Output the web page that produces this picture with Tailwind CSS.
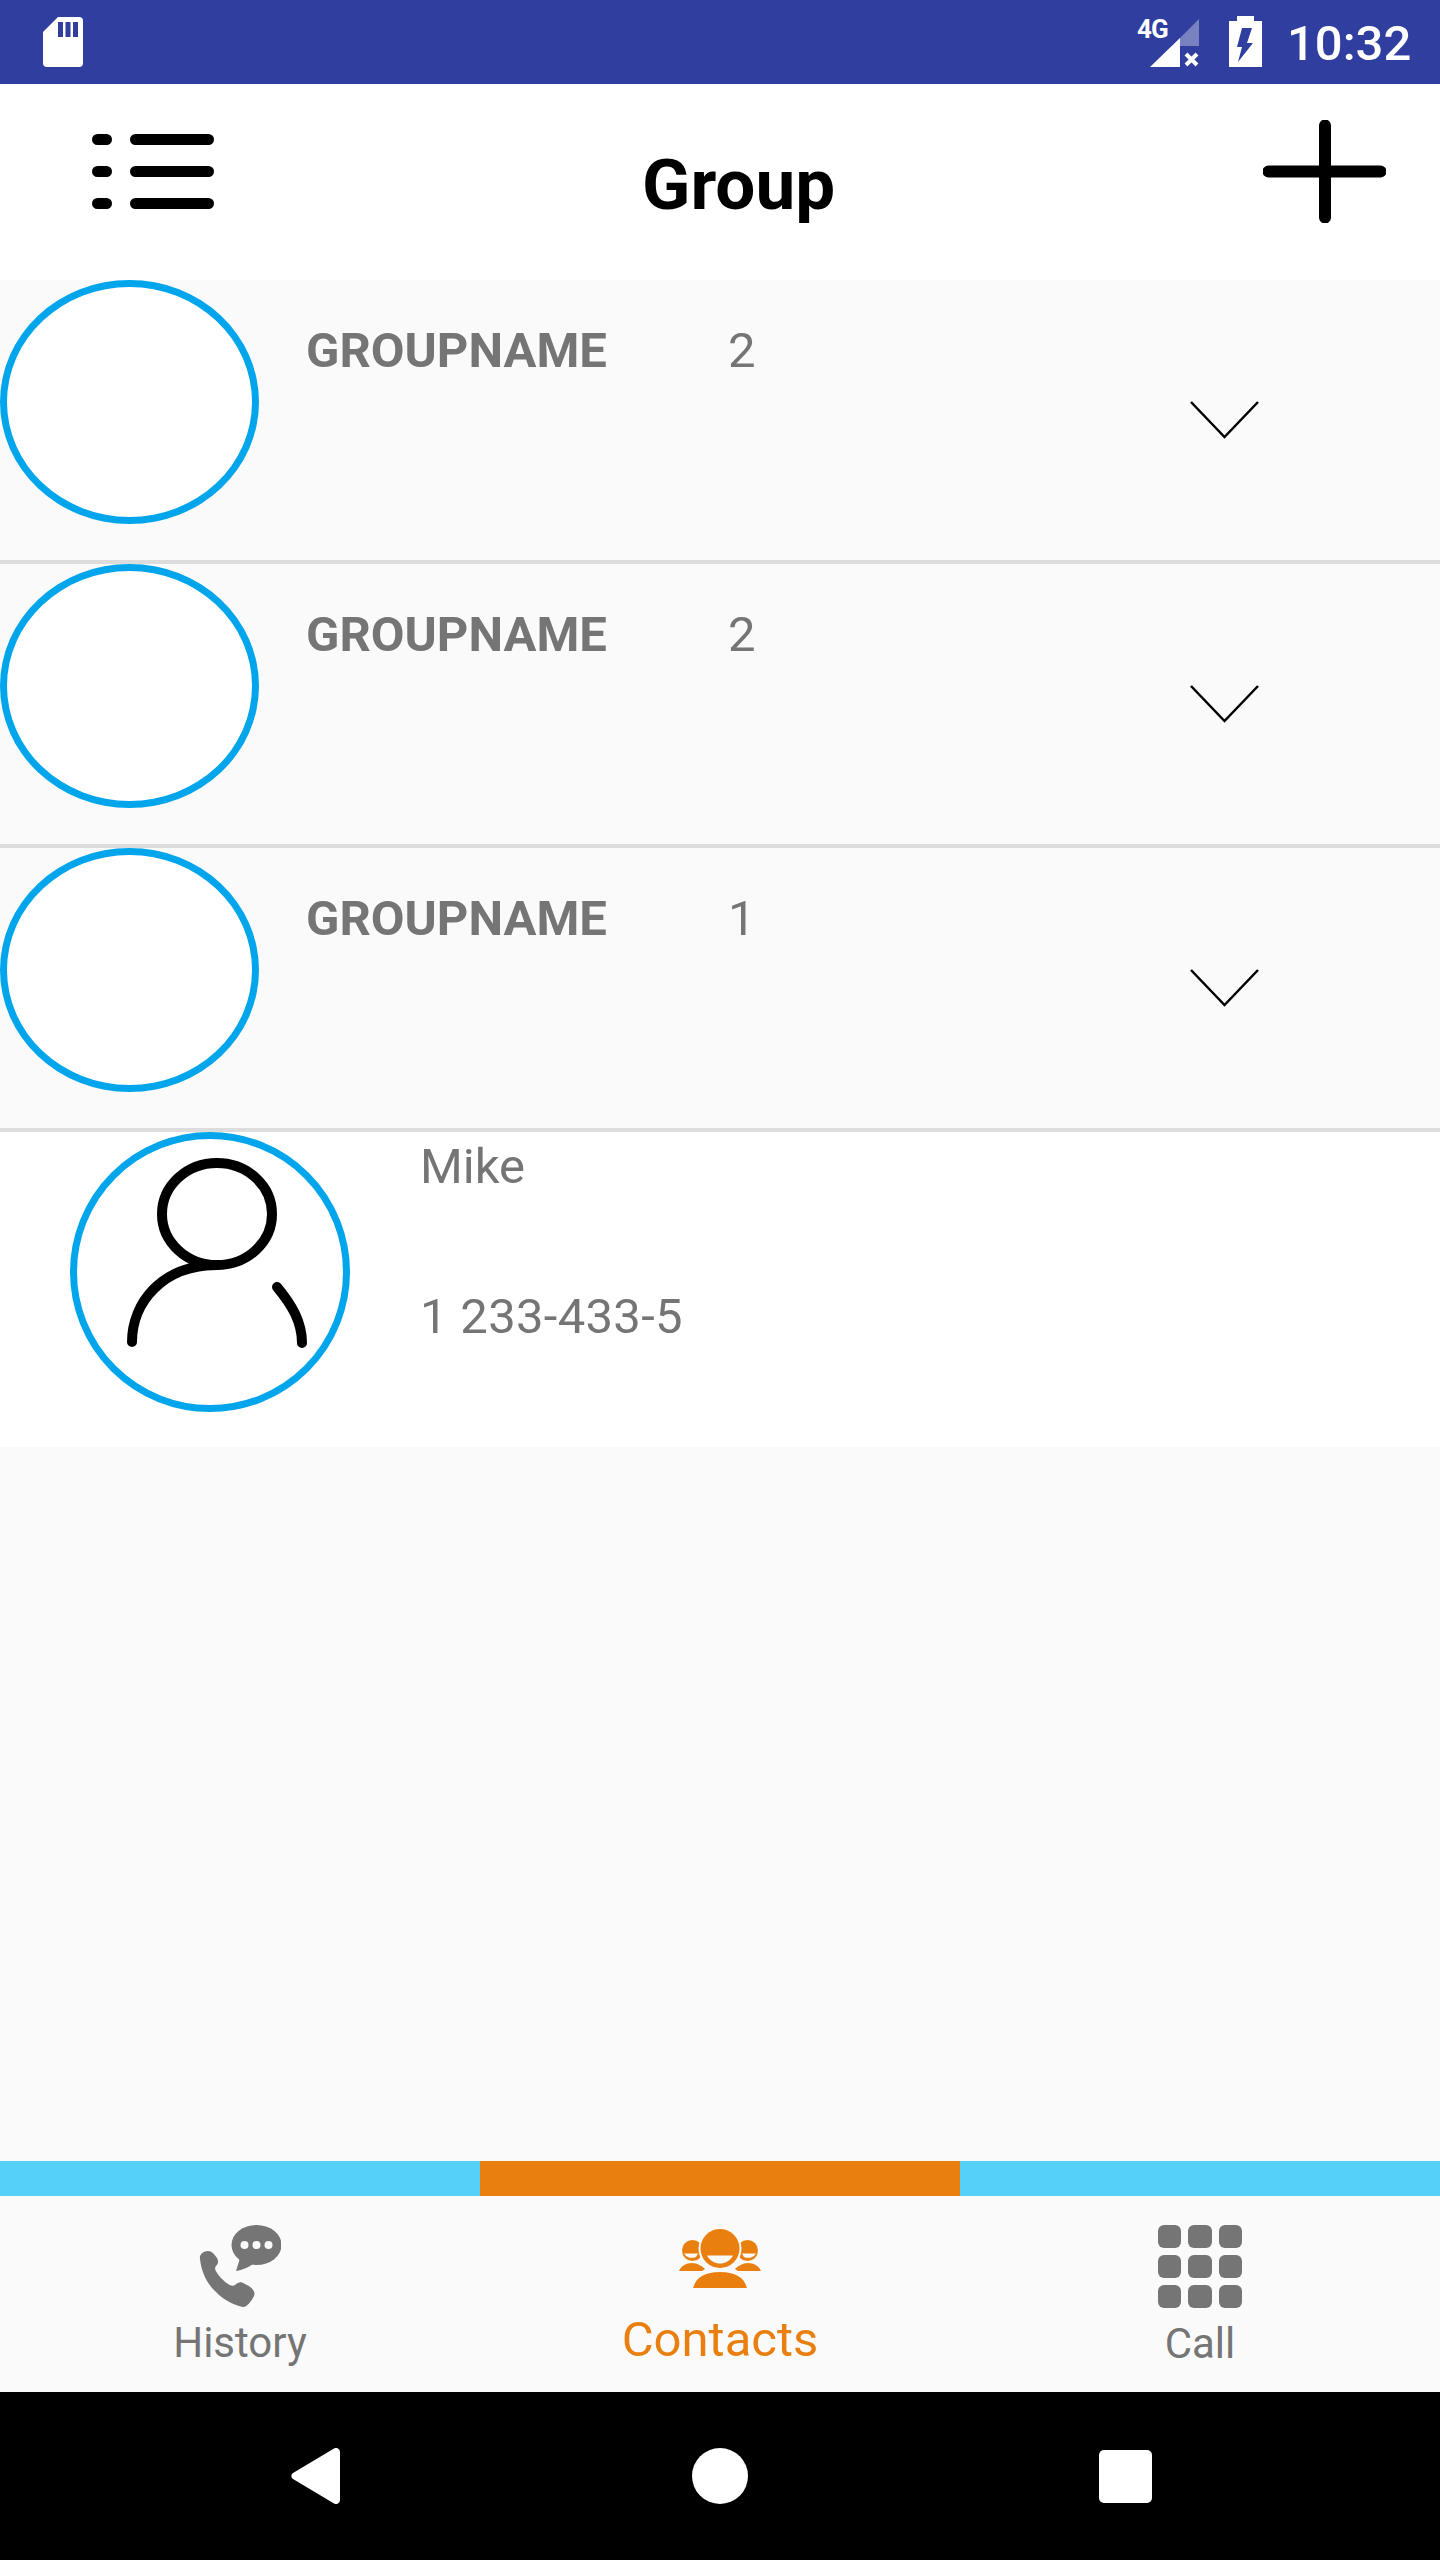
<!DOCTYPE html>
<html lang="en">
<head>
  <meta charset="UTF-8" />
  <title>Group</title>
  <script src="https://cdn.jsdelivr.net/npm/@tailwindcss/browser@4"></script>
</head>
<body class="bg-[#fafafa] font-['Roboto',sans-serif] text-[#757575]">
  <div class="w-[1440px] h-[2560px] flex flex-col overflow-hidden">

    <!-- status bar -->
    <div class="h-[84px] bg-[#303f9f] flex items-center text-white relative shrink-0">
      <svg class="ml-[43px]" width="40" height="50" viewBox="0 0 40 50">
        <path d="M15 0H36a4 4 0 0 1 4 4V46a4 4 0 0 1-4 4H4a4 4 0 0 1-4-4V15Z" fill="#fff"/>
        <path d="M15 5h5v15h-5zM22.500 5h5v15h-5zM30 5h5v15h-5z" fill="#303f9f"/>
      </svg>
      <span class="absolute left-[1137px] top-[14px] text-[26px] leading-[30px] font-bold tracking-[-1px]">4G</span>
      <svg class="absolute left-[1150px] top-[19px]" width="49" height="48" viewBox="0 0 49 48">
        <path d="M0 48L30 19V48Z" fill="#fff"/>
        <path d="M30 19L49 0V27H30Z" fill="#fff" fill-opacity="0.35"/>
        <path d="M36 35L47 46M47 35L36 46" stroke="#fff" stroke-width="4"/>
      </svg>
      <svg class="absolute left-[1229px] top-[16px]" width="33" height="51" viewBox="0 0 33 51">
        <path d="M8 0H25V5H33V51H0V5H8Z" fill="#fff"/>
        <path d="M13 12H23L18 27H24L9 46L13 31H8Z" fill="#303f9f"/>
      </svg>
      <span class="absolute left-[1287px] top-[15px] text-[49px] leading-[58px] font-medium">10:32</span>
    </div>

    <!-- header -->
    <div class="h-[196px] bg-white relative shrink-0">
      <svg class="absolute left-[92px] top-[50px]" width="122" height="75" viewBox="0 0 122 75">
        <g stroke="#000" stroke-width="11" stroke-linecap="round">
          <path d="M5.500 5.500h9M43.500 5.500h73M5.500 37.500h9M43.500 37.500h73M5.500 69.500h9M43.500 69.500h73"/>
        </g>
      </svg>
      <h1 class="absolute left-[642px] top-[60px] text-[71px] leading-[82px] font-bold text-black">Group</h1>
      <svg class="absolute left-[1263px] top-[36px]" width="123" height="103" viewBox="0 0 123 103">
        <path d="M5.500 51.500h112M62 5.500v92" stroke="#000" stroke-width="12" stroke-linecap="round"/>
      </svg>
    </div>

    <!-- groups -->
    <div class="h-[284px] border-b-4 border-[#dcdcdc] flex items-start shrink-0">
      <div class="w-[259px] h-[244px] rounded-[50%] border-[7px] border-[#00a5ec] bg-white shrink-0"></div>
      <div class="w-[422px] ml-[47px] mt-[42px] text-[49px] leading-[58px] font-bold shrink-0">GROUPNAME</div>
      <div class="w-[462px] mt-[42px] text-[49px] leading-[58px] shrink-0">2</div>
      <svg class="mt-[120px]" width="70" height="40" viewBox="0 0 70 40"><path d="M1 2L34.500 37L68 2" fill="none" stroke="#000" stroke-width="2.500"/></svg>
    </div>
    <div class="h-[284px] border-b-4 border-[#dcdcdc] flex items-start shrink-0">
      <div class="w-[259px] h-[244px] rounded-[50%] border-[7px] border-[#00a5ec] bg-white shrink-0"></div>
      <div class="w-[422px] ml-[47px] mt-[42px] text-[49px] leading-[58px] font-bold shrink-0">GROUPNAME</div>
      <div class="w-[462px] mt-[42px] text-[49px] leading-[58px] shrink-0">2</div>
      <svg class="mt-[120px]" width="70" height="40" viewBox="0 0 70 40"><path d="M1 2L34.500 37L68 2" fill="none" stroke="#000" stroke-width="2.500"/></svg>
    </div>
    <div class="h-[284px] border-b-4 border-[#dcdcdc] flex items-start shrink-0">
      <div class="w-[259px] h-[244px] rounded-[50%] border-[7px] border-[#00a5ec] bg-white shrink-0"></div>
      <div class="w-[422px] ml-[47px] mt-[42px] text-[49px] leading-[58px] font-bold shrink-0">GROUPNAME</div>
      <div class="w-[462px] mt-[42px] text-[49px] leading-[58px] shrink-0">1</div>
      <svg class="mt-[120px]" width="70" height="40" viewBox="0 0 70 40"><path d="M1 2L34.500 37L68 2" fill="none" stroke="#000" stroke-width="2.500"/></svg>
    </div>

    <!-- contact -->
    <div class="h-[315px] bg-white flex items-start shrink-0">
      <div class="ml-[70px] w-[280px] h-[280px] rounded-full border-[7px] border-[#00a5ec] shrink-0 relative">
        <svg class="absolute left-[51px] top-[18px] overflow-visible" width="180" height="200" viewBox="0 0 180 200">
          <g fill="none" stroke="#000" stroke-width="10" stroke-linecap="round">
            <ellipse cx="89" cy="57" rx="55" ry="51"/>
            <path d="M4 185C4 146 34 108 89 108"/>
            <path d="M149 130C164 148 174 165 174 186"/>
          </g>
        </svg>
      </div>
      <div class="ml-[70px] text-[49px] leading-[58px]">
        <div class="mt-[6px]">Mike</div>
        <div class="mt-[92px] tracking-[0.3px]">1 233-433-5</div>
      </div>
    </div>

    <div class="flex-1"></div>

    <!-- tabs -->
    <div class="h-[35px] flex shrink-0">
      <div class="w-[480px] bg-[#55d1f9]"></div>
      <div class="w-[480px] bg-[#e97f0f]"></div>
      <div class="w-[480px] bg-[#55d1f9]"></div>
    </div>
    <div class="h-[196px] flex shrink-0">
      <div class="w-[480px] flex flex-col items-center">
        <svg class="mt-[29px]" width="82" height="82" viewBox="0 0 82 82">
          <ellipse cx="57.500" cy="20" rx="25" ry="20" fill="#757575"/>
          <path d="M42 30L37 46C45 45 52 41 58 36Z" fill="#757575"/>
          <circle cx="45.500" cy="20" r="4" fill="#fafafa"/><circle cx="57.500" cy="20" r="4" fill="#fafafa"/><circle cx="69.500" cy="20" r="4" fill="#fafafa"/>
          <path d="M1 34C0 30 4 26 9 26C13 26 15 29 18 33C20 37 19 39 17 41C15 43 16 46 22 53C29 60 33 62 36 60C39 57 42 56 46 59C53 62 57 67 55 71C52 77 48 82 44 82C33 80 22 73 13 63C6 55 2 44 1 34Z" fill="#757575"/>
        </svg>
        <span class="mt-[11px] text-[42px] leading-[50px]">History</span>
      </div>
      <div class="w-[480px] flex flex-col items-center text-[#e97f0f]">
        <svg class="mt-[33px]" width="82" height="59" viewBox="0 0 82 59">
          <circle cx="13.500" cy="21.500" r="10.500" fill="#e97f0f"/>
          <circle cx="68.500" cy="21.500" r="10.500" fill="#e97f0f"/>
          <path d="M5 24.500h14l-2 3.500c-3 1.500-7 1-10-1ZM77 24.500h-14l2 3.500c3 1.500 7 1 10-1Z" fill="#fafafa"/>
          <path d="M0 42c2-5 7-8 13-8 5 0 10 3 13 6l-3 2ZM82 42c-2-5-7-8-13-8-5 0-10 3-13 6l3 2Z" fill="#e97f0f"/>
          <circle cx="41" cy="19.500" r="21.500" fill="#fafafa"/>
          <circle cx="41" cy="19.500" r="19.500" fill="#e97f0f"/>
          <path d="M28 26.500H54C51 32 46 34.500 41 34.500S31 32 28 26.500Z" fill="#fafafa"/>
          <path d="M14 59c3-11 12-16 27-16s24 5 27 16Z" fill="#e97f0f"/>
        </svg>
        <span class="mt-[23px] text-[49px] leading-[58px]">Contacts</span>
      </div>
      <div class="w-[480px] flex flex-col items-center">
        <div class="mt-[29px] grid grid-cols-3 gap-[7px] w-[84px]">
          <div class="h-[23px] rounded-[6px] bg-[#757575]"></div><div class="h-[23px] rounded-[6px] bg-[#757575]"></div><div class="h-[23px] rounded-[6px] bg-[#757575]"></div>
          <div class="h-[23px] rounded-[6px] bg-[#757575]"></div><div class="h-[23px] rounded-[6px] bg-[#757575]"></div><div class="h-[23px] rounded-[6px] bg-[#757575]"></div>
          <div class="h-[23px] rounded-[6px] bg-[#757575]"></div><div class="h-[23px] rounded-[6px] bg-[#757575]"></div><div class="h-[23px] rounded-[6px] bg-[#757575]"></div>
        </div>
        <span class="mt-[11px] text-[42px] leading-[50px]">Call</span>
      </div>
    </div>

    <!-- android nav -->
    <div class="h-[168px] bg-black flex items-center shrink-0">
      <svg class="ml-[291px]" width="50" height="56" viewBox="0 0 50 56"><path d="M49 4V52a4 4 0 0 1-6 3.500L2 31a3.500 3.500 0 0 1 0-6L43 .5a4 4 0 0 1 6 3.500Z" fill="#fff"/></svg>
      <div class="ml-[351px] w-[56px] h-[56px] rounded-full bg-white"></div>
      <div class="ml-[351px] w-[53px] h-[53px] rounded-[5px] bg-white"></div>
    </div>
  </div>
</body>
</html>
